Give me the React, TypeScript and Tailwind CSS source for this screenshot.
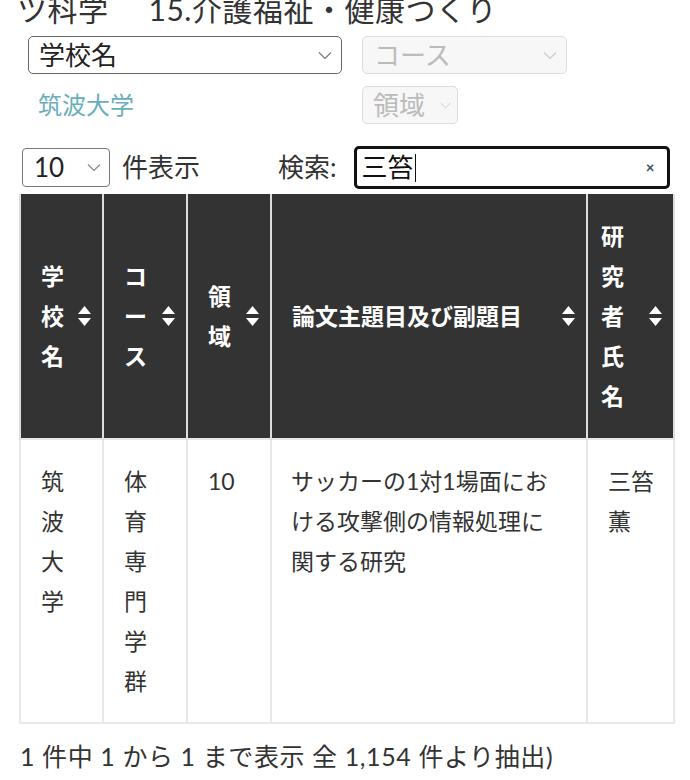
import React from "react";

const font = { fontFamily: "Lato, 'Noto Sans CJK JP', sans-serif" };

function Chevron({ className }: { className?: string }) {
  return (
    <svg width="14" height="9" viewBox="0 0 14 9" fill="none" className={className}>
      <path d="M1 1.5 7 7.5 13 1.5" stroke="currentColor" strokeWidth="1.2" />
    </svg>
  );
}

function SortIcon() {
  return (
    <svg width="15" height="22" viewBox="0 0 15 22" className="shrink-0">
      <path d="M7.5 1 14 9H1Z" fill="#fff" />
      <path d="M7.5 21 14 13H1Z" fill="#fff" />
    </svg>
  );
}

const headers = [
  { label: "学校名", w: "w-[83px]", pl: "pl-[20px]" },
  { label: "コース", w: "w-[84px]", pl: "pl-[20px]" },
  { label: "領域", w: "w-[84px]", pl: "pl-[20px]" },
  { label: "論文主題目及び副題目", w: "w-[316px]", pl: "pl-[20px]" },
  { label: "研究者氏名", w: "w-[87px]", pl: "pl-[13px]" },
];

export default function App() {
  return (
    <div className="w-[690px] h-[780px] overflow-hidden bg-white text-[#333]" style={font}>
      {/* page title, scrolled off the top */}
      <div className="pl-[17px] -mt-[9px] h-[35px] text-[30px] leading-[36px] tracking-[0.5px] text-[#333] whitespace-nowrap">
        ツ科学<span className="ml-[40px]">15.介護福祉・健康つくり</span>
      </div>

      {/* filters */}
      <div className="flex gap-[20px] pl-[28px] mt-[10px]">
        <div className="flex flex-col">
          <div className="w-[314px] h-[38px] border-[1.5px] border-[#666] rounded-[5px] flex items-center justify-between pl-[10px] pr-[9px] text-[26px] text-[#222]">
            <span>学校名</span>
            <Chevron className="text-[#777]" />
          </div>
          <div className="pl-[10px] mt-[12px] text-[24px] leading-[38px] text-[#6aaebd]">筑波大学</div>
        </div>
        <div className="flex flex-col gap-[12px]">
          <div className="w-[205px] h-[38px] border border-[#ddd] bg-[#f7f7f7] rounded-[5px] flex items-center justify-between pl-[11px] pr-[9px] text-[26px] text-[#bbb]">
            <span>コース</span>
            <Chevron className="text-[#ccc]" />
          </div>
          <div className="w-[96px] h-[38px] border border-[#ddd] bg-[#f7f7f7] rounded-[5px] flex items-center justify-between pl-[10px] pr-[6px] text-[26px] text-[#bbb]">
            <span>領域</span>
            <Chevron className="text-[#ccc] w-[11px]" />
          </div>
        </div>
      </div>

      {/* length + search */}
      <div className="flex items-center mt-[22px] pl-[22px] text-[26px] text-[#333]">
        <div className="w-[88px] h-[39px] border-[1.5px] border-[#777] rounded-[4px] flex items-center justify-between pl-[11px] pr-[8px] text-[#222]">
          <span>10</span>
          <Chevron className="text-[#888]" />
        </div>
        <span className="ml-[12px]">件表示</span>
        <span className="ml-[78px]">検索:</span>
        <div className="ml-[17px] w-[316px] h-[43px] border-[3px] border-[#111] rounded-[5px] flex items-center justify-between pl-[5px] pr-[12px]">
          <span className="flex items-center text-[#111]">
            三笞<span className="w-[1.5px] h-[28px] bg-[#111] ml-[1px]" />
          </span>
          <span className="text-[15px] font-bold text-[#2d4a70]">×</span>
        </div>
      </div>

      {/* table */}
      <table className="ml-[19px] mt-[5px] border-collapse table-fixed w-[654px] text-[23px] leading-[40px]">
        <thead>
          <tr className="bg-[#333] text-white">
            {headers.map((h) => (
              <th key={h.label} className={`${h.w} ${h.pl} pr-[10px] py-[22px] border-x-2 border-[#ddd] font-bold text-left align-middle`}>
                <div className="flex items-center justify-between gap-[6px]">
                  <span className="break-all">{h.label}</span>
                  <SortIcon />
                </div>
              </th>
            ))}
          </tr>
        </thead>
        <tbody>
          <tr className="align-top">
            <td className="pl-[20px] pr-[24px] pt-[21px] pb-[21px] border-2 border-[#e8e8e8] break-all">筑波大学</td>
            <td className="pl-[20px] pr-[24px] pt-[21px] pb-[21px] border-2 border-[#e8e8e8] break-all">体育専門学群</td>
            <td className="pl-[20px] pr-[10px] pt-[21px] pb-[21px] border-2 border-[#e8e8e8]">10</td>
            <td className="pl-[19px] pr-[10px] pt-[21px] pb-[21px] border-2 border-[#e8e8e8]">
              サッカーの1対1場面にお
              <br />
              ける攻撃側の情報処理に
              <br />
              関する研究
            </td>
            <td className="pl-[20px] pr-[10px] pt-[21px] pb-[21px] border-2 border-[#e8e8e8]">
              三笞
              <br />
              薫
            </td>
          </tr>
        </tbody>
      </table>

      <div className="pl-[20px] mt-[14px] text-[25px] leading-[36px] tracking-[0.6px] text-[#333] whitespace-nowrap">
        1 件中 1 から 1 まで表示 全 1,154 件より抽出)
      </div>
    </div>
  );
}
